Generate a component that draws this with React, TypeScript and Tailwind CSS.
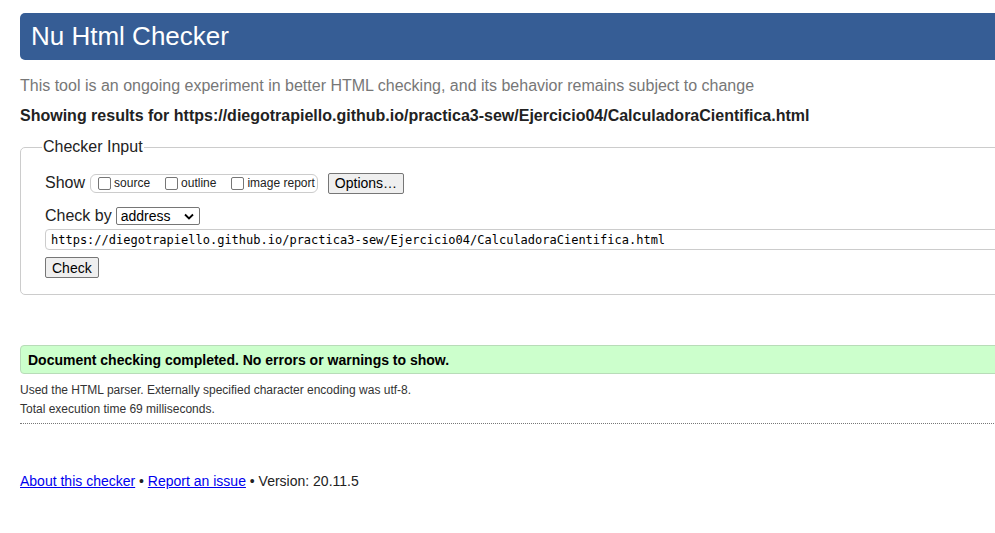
const url =
  "https://diegotrapiello.github.io/practica3-sew/Ejercicio04/CalculadoraCientifica.html";

function Box({ label }: { label: string }) {
  return (
    <label className="flex items-center">
      <span className="mr-[3px] h-[13px] w-[13px] rounded-[2px] border border-[#767676] bg-white" />
      <span className="text-[12px] leading-none text-[#222]">{label}</span>
    </label>
  );
}

function Btn({ children }: { children: string }) {
  return (
    <button className="h-[21px] rounded-[2px] border border-[#767676] bg-[#efefef] px-[6px] text-[14px] leading-none text-black">
      {children}
    </button>
  );
}

export default function App() {
  return (
    <div className="h-[533px] w-[995px] overflow-hidden bg-white font-['Liberation_Sans',Arial,sans-serif] text-[#222]">
      <div className="w-[1100px] pl-5 pt-[13px]">
        {/* header */}
        <h1 className="h-[47px] rounded-[5px] bg-[#365d95] pl-[11px] text-[26px] leading-[47px] text-white">
          Nu Html Checker
        </h1>

        <p className="mt-4 text-[16px] leading-5 text-[#777]">
          This tool is an ongoing experiment in better HTML checking, and its
          behavior remains subject to change
        </p>
        <p className="mt-[10px] text-[16px] font-bold leading-5 text-[#222]">
          Showing results for {url}
        </p>

        {/* checker form */}
        <fieldset className="mt-[11px] rounded-[5px] border border-[#ccc] px-6 pb-[16px]">
          <legend className="ml-[-3px] px-[1px] text-[16px] leading-5 text-[#222]">
            Checker Input
          </legend>

          <div className="mt-4 flex h-5 items-center">
            <span className="text-[16px] leading-5">Show</span>
            <div className="ml-[5px] flex h-[19px] items-center gap-[15px] rounded-[6px] border border-[#ccc] pl-[7px] pr-[2px]">
              <Box label="source" />
              <Box label="outline" />
              <Box label="image report" />
            </div>
            <div className="ml-[10px]">
              <Btn>Options…</Btn>
            </div>
          </div>

          <div className="mt-[14px] flex h-[18px] items-center">
            <span className="text-[16px] leading-5">Check by</span>
            <div className="ml-[4px] flex h-[18px] w-[84px] items-center justify-between rounded-[2px] border border-[#767676] bg-white pl-[4px] pr-[5px]">
              <span className="text-[14px] leading-none text-black">address</span>
              <svg width="10" height="7" viewBox="0 0 10 7">
                <path d="M1 1.5 L5 5.5 L9 1.5" fill="none" stroke="#000" strokeWidth="1.8" />
              </svg>
            </div>
          </div>

          <div className="mt-[4px] flex h-[21px] items-center rounded-[4px] border border-[#ccc] pl-[5px]">
            <span className="font-['DejaVu_Sans_Mono',monospace] text-[12px] leading-none text-black">
              {url}
            </span>
          </div>

          <div className="mt-[7px] flex">
            <Btn>Check</Btn>
          </div>
        </fieldset>

        {/* result */}
        <div className="mt-[50px] flex h-[29px] items-center rounded-[4px] border border-[#b8dcb8] bg-[#ccffcc] pl-[7px]">
          <span className="text-[14px] font-bold leading-none text-black">
            Document checking completed. No errors or warnings to show.
          </span>
        </div>

        <div className="mt-[7px] text-[12px] leading-[19px] text-[#333]">
          <p>Used the HTML parser. Externally specified character encoding was utf-8.</p>
          <p>Total execution time 69 milliseconds.</p>
        </div>

        <hr className="mt-[4px] border-t border-dotted border-[#777]" />

        <p className="mt-[47px] text-[14px] leading-5 text-[#222]">
          <a className="text-[#0000ee] underline" href="#">
            About this checker
          </a>{" "}
          •{" "}
          <a className="text-[#0000ee] underline" href="#">
            Report an issue
          </a>{" "}
          • Version: 20.11.5
        </p>
      </div>
    </div>
  );
}
